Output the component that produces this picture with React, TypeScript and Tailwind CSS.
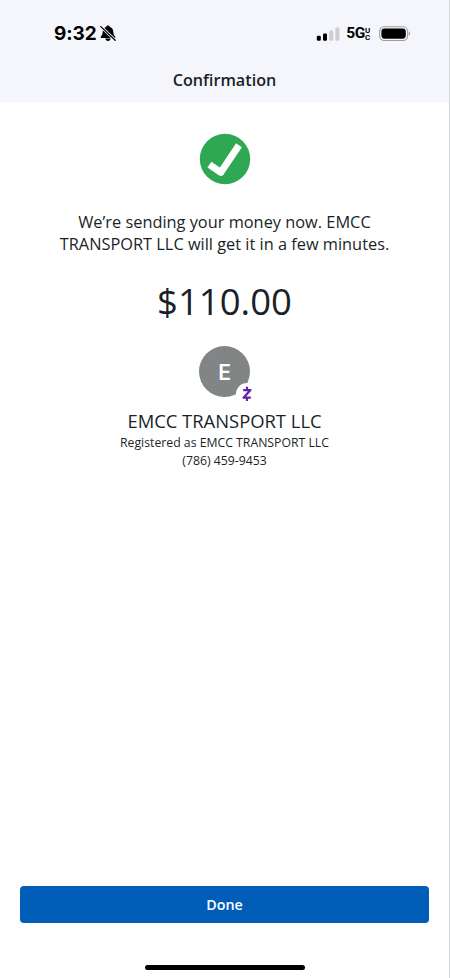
const SignalBars = () => (
  <svg width="24" height="16" viewBox="0 0 24 16" className="shrink-0">
    <rect x="0.8" y="9.8" width="4" height="5" rx="1.2" fill="#000" />
    <rect x="7" y="7.6" width="4" height="7.2" rx="1.2" fill="#000" />
    <rect x="13.2" y="4.6" width="4" height="10.2" rx="1.2" fill="#cccdd1" />
    <rect x="19.4" y="1.4" width="4" height="13.4" rx="1.2" fill="#cccdd1" />
  </svg>
);

const Battery = () => (
  <svg width="33" height="16" viewBox="0 0 33 16" className="shrink-0">
    <rect x="0.6" y="0.7" width="28" height="13.8" rx="4.6" fill="none" stroke="#9c9da1" strokeWidth="1.1" />
    <rect x="2.4" y="2.5" width="24.4" height="10.2" rx="3.1" fill="#000" />
    <path d="M29.8 5.4c1.6.6 1.6 3.8 0 4.4z" fill="#9c9da1" />
  </svg>
);

const BellSlash = () => (
  <svg width="16" height="17" viewBox="0 0 16 17" className="shrink-0">
    <path d="M8 .6C6.9.6 6.3 1.2 6.1 2 3.7 2.6 2.8 4.7 2.7 6.7 2.6 9.3 2 10.1 1 11.2c-.8.9-.4 1.7.7 1.7h12.6c1.1 0 1.5-.8.7-1.7-1-1.1-1.6-1.9-1.7-4.5C13.2 4.7 12.3 2.6 9.9 2 9.7 1.2 9.1.6 8 .6z" fill="#000" />
    <path d="M5.3 13.6h5.4c-.2 1.5-1.3 2.4-2.7 2.4s-2.5-.9-2.7-2.4z" fill="#000" />
    <path d="M.8 1.6l14.4 13.6" stroke="#f5f6fb" strokeWidth="2.8" />
    <path d="M.8 1.6l14.4 13.6" stroke="#000" strokeWidth="1.3" strokeLinecap="round" />
  </svg>
);

const SuccessMark = () => (
  <svg width="52" height="52" viewBox="0 0 52 52">
    <circle cx="26" cy="26" r="25.2" fill="#2ea853" />
    <path d="M10.4 31.6L21.8 39.4L40 12.2" fill="none" stroke="#fff" strokeWidth="7" strokeLinejoin="round" />
  </svg>
);

const ZelleMark = () => (
  <svg width="12" height="16" viewBox="0 0 12 16">
    <path d="M2.2 4.1h7.2L2.6 11.7h7.2" fill="none" stroke="#6420ac" strokeWidth="2.3" strokeLinejoin="round" />
    <path d="M6 .7v3M6 12v3" stroke="#6420ac" strokeWidth="2.2" />
  </svg>
);

const StatusBar = () => (
  <div className="flex h-[67px] items-center pr-[37px] pl-[54px] font-[Inter,sans-serif] text-black">
    <span className="text-[19px] leading-none font-bold tracking-[-0.1px]">9:32</span>
    <div className="ml-[3px]">
      <BellSlash />
    </div>
    <div className="ml-auto flex items-center">
      <SignalBars />
      <span className="ml-1.5 pt-px font-[Roboto,sans-serif] text-[15.5px] leading-none font-bold tracking-[-0.3px]">5G</span>
      <span className="mr-[7px] flex w-[7px] flex-col pt-px font-[Roboto,sans-serif] text-[8px] font-bold">
        <span className="leading-[7px]">U</span>
        <span className="leading-[7px]">C</span>
      </span>
      <Battery />
    </div>
  </div>
);

const Recipient = () => (
  <section className="flex flex-col items-center">
    <div className="relative flex h-[51px] w-[51px] items-center justify-center rounded-full bg-[#818586]">
      <span className="pt-0.5 font-[Inter,sans-serif] text-[21px] leading-none font-semibold text-white">E</span>
      <div className="absolute -right-[8px] -bottom-[8px] flex h-[22px] w-[22px] items-center justify-center rounded-full bg-white">
        <ZelleMark />
      </div>
    </div>
    <h2 className="mt-3 text-[18.4px] leading-6">EMCC TRANSPORT LLC</h2>
    <p className="mt-px text-[12.25px] leading-[18px]">Registered as EMCC TRANSPORT LLC</p>
    <p className="text-[12.25px] leading-[18px]">(786) 459-9453</p>
  </section>
);

export default function App() {
  return (
    <div className="flex h-[978px] w-[450px] flex-col border-r border-[#d6d7da] bg-white font-['Open_Sans',sans-serif] text-[#1b1f27]">
      <header className="h-[102px] bg-[#f5f6fb]">
        <StatusBar />
        <h1 className="text-center text-[16.2px] leading-[26px] font-semibold">Confirmation</h1>
      </header>

      <main className="flex flex-1 flex-col items-center pt-[31px]">
        <SuccessMark />
        <p className="mt-[26px] text-center text-[16.35px] leading-[22px]">
          We’re sending your money now. EMCC
          <br />
          TRANSPORT LLC will get it in a few minutes.
        </p>
        <p className="mt-[22px] mb-[21px] text-[36.5px] leading-[48px]">$110.00</p>
        <Recipient />
      </main>

      <footer className="flex flex-col items-center pr-5 pb-[8.5px] pl-5">
        <button className="h-[37px] w-full rounded-[4px] bg-[#005eb8] pt-px text-[14.3px] font-semibold text-white">Done</button>
        <div className="mt-[42px] h-[5px] w-[160px] rounded-full bg-black" />
      </footer>
    </div>
  );
}
